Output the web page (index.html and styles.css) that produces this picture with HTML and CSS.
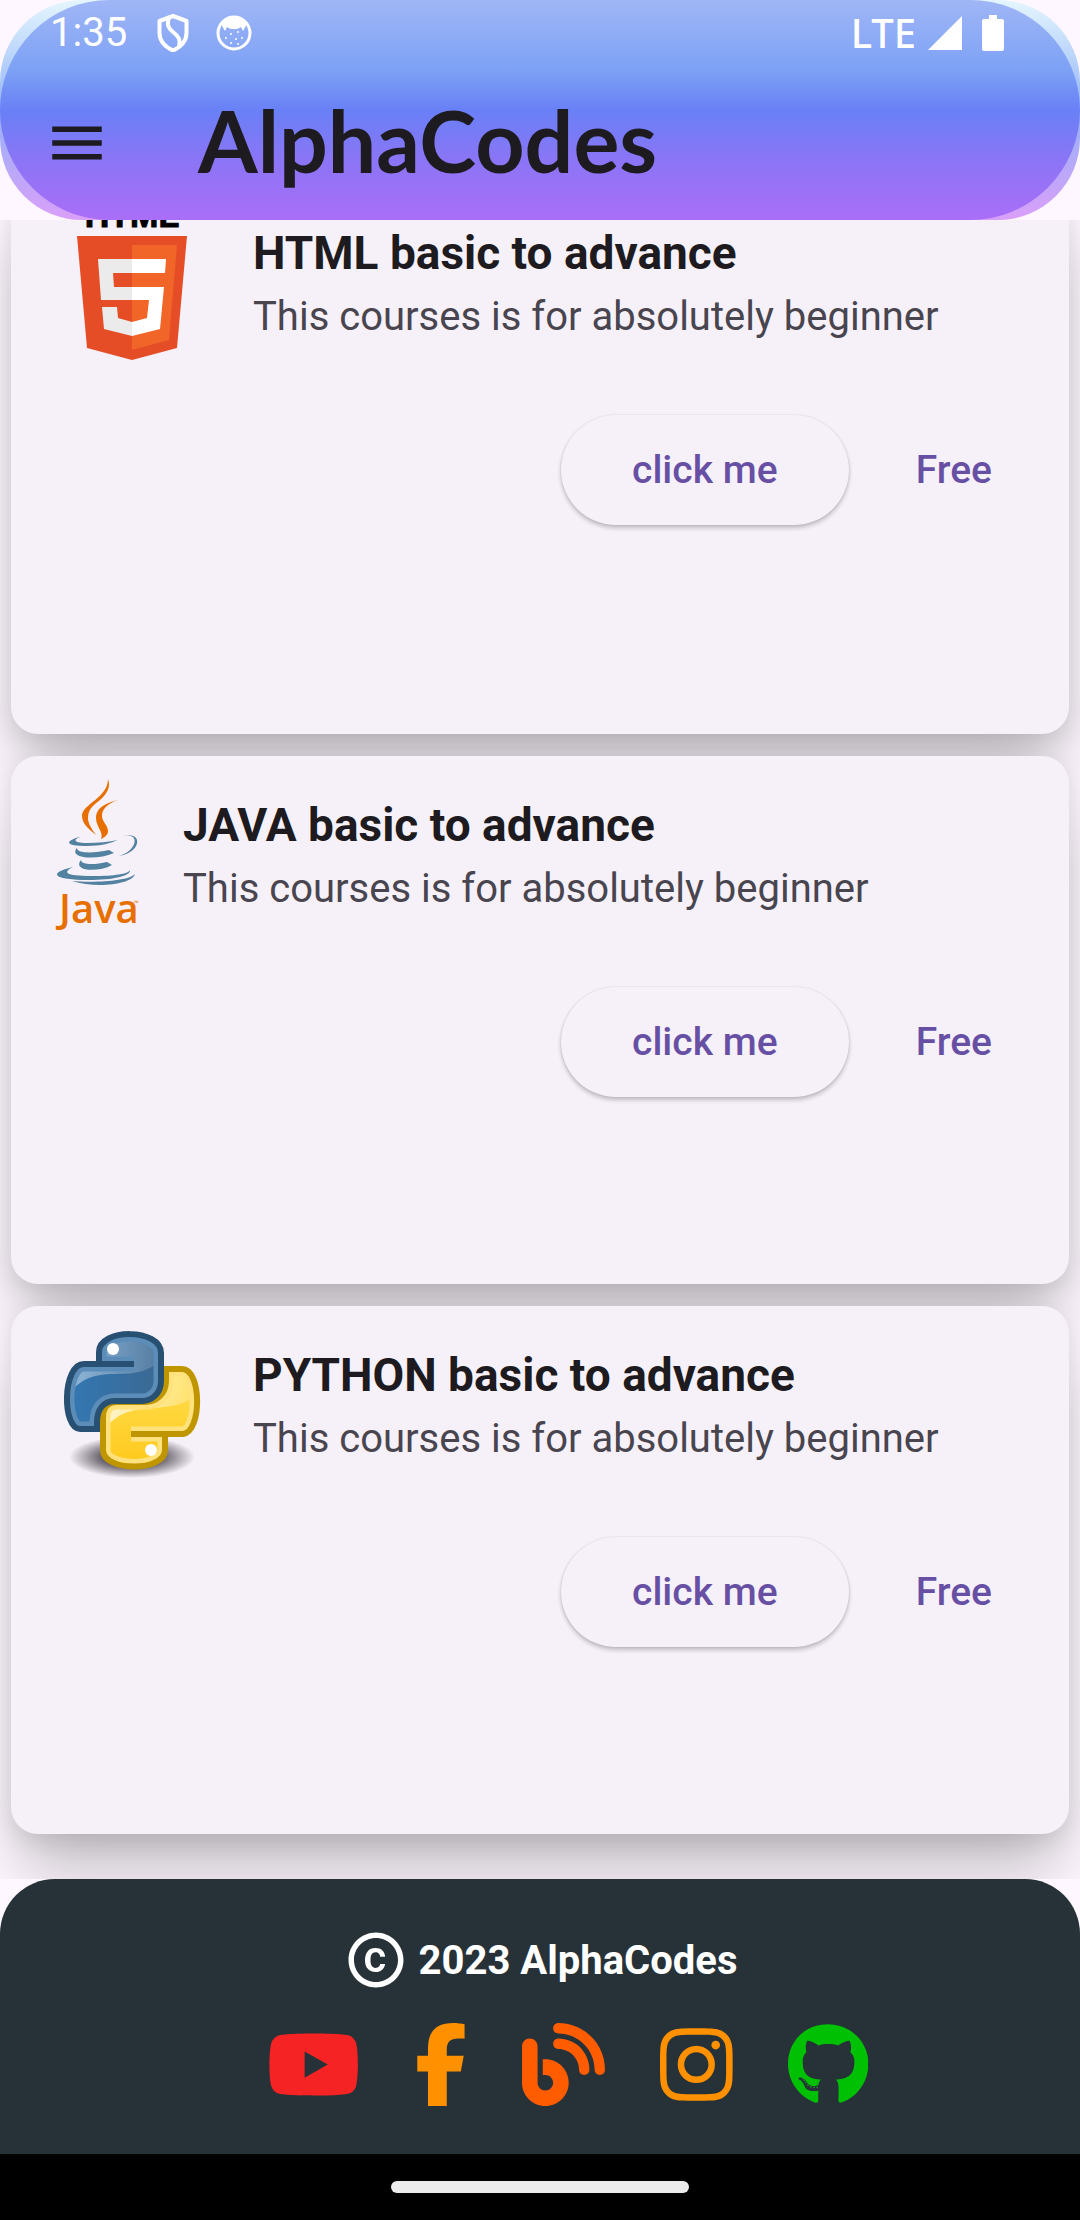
FILE: index.html
```html
<!DOCTYPE html>
<html lang="en">
<head>
<meta charset="utf-8">
<meta name="viewport" content="width=device-width, initial-scale=1">
<title>AlphaCodes</title>
<link rel="stylesheet" href="styles.css">
</head>
<body>
<header class="header">
  <div class="header-inner">
    <div class="status">
      <span class="clock">1:35</span>
      <svg class="status-shield" viewBox="0 0 32 38" aria-hidden="true"><path d="M16 2 29.500 7v12c0 8-6 14-13.500 17.500C8.500 33 2.500 27 2.500 19V7Z" fill="none" stroke="#fff" stroke-width="4" stroke-linejoin="round"/><path d="M12 4c-3 6-1 10 4 14s8 7 6 14" fill="none" stroke="#fff" stroke-width="4"/></svg>
      <svg class="status-face" viewBox="0 0 36 36" aria-hidden="true"><circle cx="18" cy="18" r="16" fill="none" stroke="#fff" stroke-width="3"/><path d="M5 9C10 0 26 0 31 9l-4 7-2-4c-4 3-10 3-14 0l-2 4Z" fill="#fff"/><g fill="#fff"><circle cx="10" cy="23" r="1"/><circle cx="15" cy="19" r="1"/><circle cx="22" cy="17" r="1"/><circle cx="26" cy="23" r="1"/><circle cx="20" cy="24" r="1"/><circle cx="15" cy="28" r="1"/><circle cx="22" cy="29" r="1"/></g></svg>
      <span class="network">LTE</span>
      <svg class="status-signal" viewBox="0 0 34 34" aria-hidden="true"><path d="M34 0v34H0Z" fill="#fff"/></svg>
      <svg class="status-battery" viewBox="0 0 22 36" aria-hidden="true"><path d="M7 0h8v4h5q2 0 2 2v28q0 2-2 2H2q-2 0-2-2V6q0-2 2-2h5Z" fill="#fff"/></svg>
    </div>
    <div class="toolbar">
      <button class="menu" type="button" aria-label="Open menu"><svg viewBox="0 0 24 24" aria-hidden="true"><path fill="#1d1b20" d="M3 18h18v-2H3v2zm0-5h18v-2H3v2zm0-7v2h18V6H3z"/></svg></button>
      <h1 class="brand">AlphaCodes</h1>
    </div>
  </div>
</header>

<main class="scroller">
  <div class="courses">
    <article class="card card-first">
      <div class="tile">
        <svg class="logo" viewBox="0 0 154 154" role="img" aria-label="HTML5">
          <text x="77" y="21" text-anchor="middle" font-family="Liberation Sans" font-weight="700" font-size="34" stroke="#000">HTML</text>
          <path fill="#e44d26" d="M22 30h110l-10 112-45 12-45-12Z"/>
          <path fill="#f16529" d="M77 39h45l-8 95-37 10Z"/>
          <path fill="#ebebeb" d="M77 53H43l3 41h31V81H59l-1-14h19ZM77 116l-14-4-1-11H47l2 22 28 7Z"/>
          <path fill="#fff" d="M77 53h34l-1 14H77ZM77 81h32l-4 42-28 7v-14l15-4 2-18H77Z"/>
        </svg>
        <div class="tile-text"><h2>HTML basic to advance</h2><p>This courses is for absolutely beginner</p></div>
      </div>
      <div class="actions"><button class="raised" type="button">click me</button><button class="flat" type="button">Free</button></div>
    </article>

    <article class="card">
      <div class="tile">
        <svg class="logo logo-narrow" viewBox="0 0 84 154" role="img" aria-label="Java">
          <g fill="#e76f00">
            <path d="M53 1C56 9 52 16 45 22C37 28 33 32 33 40C33 46 37 51 41 57C34 51 27 46 27 38C27 26 53 20 53 1Z"/>
            <path d="M63 22C52 26 47 31 47 38C47 44 53 47 53 53C53 57 50 59 46 61C49 54 41 49 41 40C41 29 52 25 63 22Z"/>
          </g>
          <g fill="#5382a1">
            <path d="M28 58c-20 5-18 10 4 10 14 0 24-3 31-6-9 2-20 3-31 3-15 0-14-4-4-7Z"/>
            <path d="M68 58c18-4 14 15-4 20 22-3 25-25 4-20ZM22 70c-9 10 19 13 37 5l-5-3c-14 3-32 4-32-2ZM26 82c-9 11 17 13 31 5l-5-3c-12 3-26 3-26-2Z"/>
            <path d="M18 89c-26 6-20 13 16 13 24 0 42-4 41-10-2 4-15 6-38 6-28 0-29-4-19-9ZM80 96c-2 10-38 15-63 7 23 2 57 0 63-7Z"/>
          </g>
          <text x="4" y="145" fill="#e76f00" font-family="Open Sans" font-weight="600" font-size="40">Java</text>
          <text x="79" y="127" fill="#e76f00" font-family="Open Sans" font-size="6">™</text>
        </svg>
        <div class="tile-text"><h2>JAVA basic to advance</h2><p>This courses is for absolutely beginner</p></div>
      </div>
      <div class="actions"><button class="raised" type="button">click me</button><button class="flat" type="button">Free</button></div>
    </article>

    <article class="card">
      <div class="tile">
        <svg class="logo" viewBox="0 0 154 154" role="img" aria-label="Python">
          <defs>
            <radialGradient id="ground"><stop offset="0" stop-color="#302b34"/><stop offset=".5" stop-color="#302b34" stop-opacity=".7"/><stop offset="1" stop-color="#302b34" stop-opacity="0"/></radialGradient>
            <linearGradient id="blue" x2="1" y2="0"><stop stop-color="#3278b4"/><stop offset="1" stop-color="#3c6892"/></linearGradient>
            <linearGradient id="yellow" x2="0" y2="1"><stop stop-color="#ffe052"/><stop offset="1" stop-color="#ffc91c"/></linearGradient>
            <linearGradient id="shine" x2="1" y2="0"><stop stop-color="#fff" stop-opacity=".5"/><stop offset="1" stop-color="#fff" stop-opacity=".12"/></linearGradient>
            <linearGradient id="gloss" x2="1" y2="0"><stop stop-color="#fff" stop-opacity=".8"/><stop offset="1" stop-color="#fff" stop-opacity=".2"/></linearGradient>
            <path id="snake-blue" d="M79 36H44V24C44 0 106 0 106 25V53C106 66 96 73 87 73H60C48 73 42 82 42 94V101H25C7 101 7 36 29 36Z"/>
            <path id="snake-yellow" d="M76 106H128C147 104 147 41 127 41H111V53C111 67 100 74 90 74H62C52 74 48 81 48 89V122C48 144 110 144 110 122V108"/>
            <clipPath id="clip-blue"><use href="#snake-blue"/></clipPath>
            <clipPath id="clip-yellow"><use href="#snake-yellow"/></clipPath>
          </defs>
          <ellipse cx="77" cy="129" rx="63" ry="21" fill="url(#ground)"/>
          <use href="#snake-yellow" fill="url(#yellow)"/>
          <g clip-path="url(#clip-yellow)"><path d="M50 101C75 68 110 90 141 68V28H42Z" fill="url(#gloss)"/><use href="#snake-yellow" fill="none" stroke="#ffe27d" stroke-width="15"/></g>
          <use href="#snake-yellow" fill="none" stroke="#bf9600" stroke-width="6"/>
          <use href="#snake-blue" fill="url(#blue)"/>
          <g clip-path="url(#clip-blue)"><path d="M12 69C40 28 75 61 106 32V0H5Z" fill="url(#shine)"/><use href="#snake-blue" fill="none" stroke="#5c8db8" stroke-width="15"/></g>
          <path d="M79 36H29C7 36 7 101 25 101H42V94C42 82 48 73 60 73H87C96 73 106 66 106 53V25C106 0 44 0 44 24V36" fill="none" stroke="#285073" stroke-width="6"/>
          <circle cx="58" cy="21" r="6" fill="#fff"/><circle cx="96" cy="122" r="6" fill="#fff"/>
        </svg>
        <div class="tile-text"><h2>PYTHON basic to advance</h2><p>This courses is for absolutely beginner</p></div>
      </div>
      <div class="actions"><button class="raised" type="button">click me</button><button class="flat" type="button">Free</button></div>
    </article>
  </div>
</main>

<footer class="footer">
  <p class="copyright">
    <svg viewBox="0 0 24 24" role="img" aria-label="Copyright"><path fill="#fff" d="M10.080 10.860c.05-.33.16-.62.3-.87s.34-.46.59-.62c.24-.15.54-.22.91-.23.23.01.44.05.63.13.2.09.38.21.52.36s.25.33.34.53.13.42.14.64h1.790c-.02-.47-.11-.9-.28-1.290s-.4-.73-.7-1.010-.66-.5-1.080-.66-.88-.23-1.390-.23c-.65 0-1.220.11-1.700.34s-.88.53-1.200.92-.56.84-.71 1.360S8 11.290 8 11.870v.27c0 .58.08 1.120.23 1.640s.39.97.71 1.350.72.69 1.200.91 1.050.34 1.700.34c.47 0 .91-.08 1.320-.23s.77-.36 1.080-.63.56-.58.74-.94.29-.74.3-1.150h-1.790c-.01.21-.06.4-.15.58s-.21.33-.36.46-.32.23-.52.3c-.19.07-.39.09-.6.1-.36-.01-.66-.08-.89-.23-.25-.16-.45-.37-.59-.62s-.25-.55-.3-.88-.08-.67-.08-1v-.27c0-.35.03-.68.08-1.010zM12 2C6.480 2 2 6.480 2 12s4.480 10 10 10 10-4.480 10-10S17.520 2 12 2zm0 18c-4.410 0-8-3.590-8-8s3.590-8 8-8 8 3.590 8 8-3.590 8-8 8z"/></svg>
    2023 AlphaCodes
  </p>
  <nav class="social" aria-label="Social">
    <a href="#youtube" aria-label="YouTube"><svg viewBox="0 0 576 512"><path fill="#f52323" d="M549.655 124.083c-6.281-23.650-24.787-42.276-48.284-48.597C458.781 64 288 64 288 64S117.220 64 74.629 75.486c-23.497 6.322-42.003 24.947-48.284 48.597-11.412 42.867-11.412 132.305-11.412 132.305s0 89.438 11.412 132.305c6.281 23.650 24.787 41.500 48.284 47.821C117.220 448 288 448 288 448s170.780 0 213.371-11.486c23.497-6.321 42.003-24.171 48.284-47.821 11.412-42.867 11.412-132.305 11.412-132.305s0-89.438-11.412-132.305zm-317.510 213.508V175.185l142.739 81.205-142.739 81.201z"/></svg></a>
    <a href="#facebook" aria-label="Facebook"><svg viewBox="0 0 320 512"><path fill="#ff9100" d="M80 299.300V512H196V299.300h86.500l18-97.800H196V166.900c0-51.700 20.300-71.500 72.700-71.500c16.300 0 29.400 .4 37 1.200V7.900C291.400 4 256.400 0 236.200 0C129.300 0 80 50.500 80 159.400v42.100H14v97.800H80z"/></svg></a>
    <a href="#blog" aria-label="Blog"><svg viewBox="0 0 512 512"><path fill="#ff5c00" d="M192 32c0 17.700 14.300 32 32 32c123.700 0 224 100.300 224 224c0 17.700 14.300 32 32 32s32-14.300 32-32C512 128.900 383.100 0 224 0c-17.700 0-32 14.300-32 32zm0 96c0 17.700 14.300 32 32 32c70.700 0 128 57.300 128 128c0 17.700 14.300 32 32 32s32-14.300 32-32c0-106-86-192-192-192c-17.700 0-32 14.300-32 32zM96 144c0-26.500-21.500-48-48-48S0 117.500 0 144V368c0 79.500 64.500 144 144 144s144-64.500 144-144s-64.500-144-144-144H128v96h16c26.500 0 48 21.500 48 48s-21.500 48-48 48s-48-21.500-48-48V144z"/></svg></a>
    <a href="#instagram" aria-label="Instagram"><svg viewBox="0 0 448 512"><path fill="#ff9100" d="M224.100 141c-63.600 0-114.900 51.300-114.900 114.900s51.300 114.900 114.900 114.900S339 319.500 339 255.900 287.700 141 224.100 141zm0 189.600c-41.100 0-74.700-33.500-74.700-74.700s33.500-74.700 74.700-74.700 74.700 33.500 74.700 74.700-33.600 74.700-74.700 74.700zm146.400-194.300c0 14.900-12 26.800-26.800 26.800-14.900 0-26.800-12-26.800-26.800s12-26.800 26.800-26.800 26.800 12 26.800 26.800zm76.100 27.200c-1.700-35.900-9.900-67.700-36.200-93.900-26.200-26.200-58-34.400-93.900-36.200-37-2.100-147.900-2.100-184.800 0-35.800 1.700-67.600 9.900-93.900 36.100s-34.400 58-36.200 93.900c-2.100 37-2.100 147.900 0 184.800 1.700 35.900 9.900 67.700 36.200 93.900s58 34.400 93.900 36.200c37 2.100 147.900 2.100 184.800 0 35.900-1.700 67.700-9.900 93.900-36.200 26.200-26.200 34.400-58 36.200-93.900 2.100-37 2.100-147.800 0-184.700zM398.800 388c-7.800 19.600-22.900 34.700-42.600 42.600-29.500 11.700-99.500 9-132.100 9s-102.700 2.600-132.100-9c-19.600-7.800-34.700-22.900-42.600-42.600-11.700-29.500-9-99.500-9-132.100s-2.600-102.700 9-132.100c7.800-19.600 22.900-34.700 42.600-42.600 29.500-11.700 99.500-9 132.100-9s102.700-2.600 132.100 9c19.600 7.800 34.700 22.900 42.600 42.600 11.700 29.500 9 99.500 9 132.100s2.700 102.700-9 132.100z"/></svg></a>
    <a href="#github" aria-label="GitHub"><svg viewBox="0 0 496 512"><path fill="#00c004" d="M165.900 397.400c0 2-2.300 3.600-5.200 3.600-3.300.3-5.600-1.300-5.600-3.600 0-2 2.300-3.600 5.200-3.600 3-.3 5.600 1.300 5.600 3.600zm-31.100-4.500c-.7 2 1.300 4.300 4.300 4.900 2.600 1 5.600 0 6.200-2s-1.300-4.300-4.300-5.200c-2.600-.7-5.500.3-6.200 2.300zm44.200-1.700c-2.900.7-4.900 2.600-4.600 4.900.3 2 2.900 3.300 5.900 2.600 2.900-.7 4.900-2.600 4.600-4.600-.3-1.900-3-3.200-5.900-2.900zM244.800 8C106.100 8 0 113.300 0 252c0 110.900 69.800 205.800 169.500 239.200 12.800 2.300 17.300-5.600 17.300-12.100 0-6.200-.3-40.400-.3-61.400 0 0-70 15-84.700-29.800 0 0-11.400-29.100-27.800-36.600 0 0-22.900-15.700 1.600-15.400 0 0 24.900 2 38.600 25.800 21.900 38.600 58.600 27.500 72.900 20.900 2.300-16 8.800-27.100 16-33.700-55.900-6.200-112.300-14.300-112.300-110.500 0-27.500 7.600-41.300 23.600-58.900-2.600-6.500-11.100-33.300 3-68.400 20.900-6.500 69 27 69 27 20-5.600 41.500-8.500 62.800-8.500s42.800 2.900 62.800 8.500c0 0 48.100-33.600 69-27 13 31.400 7.600 57.800 3 68.400 16 17.700 25.800 31.500 25.800 58.900 0 96.500-58.900 104.200-114.800 110.500 9.200 7.900 17 22.900 17 46.400 0 33.700-.3 75.400-.3 83.600 0 6.500 4.600 14.400 17.300 12.100C428.200 457.800 496 362.900 496 252 496 113.300 383.500 8 244.800 8zM97.200 352.900c-1.300 1-1 3.300.7 5.200 1.600 1.600 3.900 2.300 5.200 1 1.300-1 1-3.300-.7-5.200-1.600-1.600-3.900-2.300-5.200-1zm-10.800-8.100c-.7 1.300.3 2.900 2.300 3.900 1.600 1 3.600.7 4.300-.7.7-1.300-.3-2.900-2.300-3.900-2-.6-3.600-.3-4.300.7zm32.400 35.600c-1.600 1.300-1 4.300 1.300 6.200 2.300 2.300 5.200 2.600 6.500 1 1.300-1.300.7-4.300-1.300-6.200-2.200-2.300-5.200-2.600-6.500-1zm-11.400-14.700c-1.600 1-1.600 3.600 0 5.900 1.600 2.300 4.300 3.300 5.600 2.300 1.600-1.300 1.600-3.900 0-6.200-1.400-2.300-4-3.300-5.600-2z"/></svg></a>
  </nav>
</footer>
<div class="system-bar"><span class="handle"></span></div>
</body>
</html>
```
FILE: styles.css
```css
* { box-sizing: border-box; margin: 0; padding: 0; }

body {
  display: flex;
  flex-direction: column;
  height: 100vh;
  background: #fef7ff;
  color: #1d1b20;
  font-family: Roboto, "Liberation Sans", sans-serif;
}

svg { display: block; }
button { border: 0; background: none; font: inherit; color: inherit; }

/* App bar with the status row */
.header {
  flex: none;
  border-radius: 82px;
  background: linear-gradient(#e4f6fe, #93b4f8 50%, #da9ff9);
}
.header-inner {
  border-radius: 110px;
  background: linear-gradient(#a0b6f6, #7da1f5 32%, #6980f6 50%, #8e74f6 75%, #a96ef7);
}
.status {
  display: flex;
  align-items: center;
  height: 66px;
  padding: 0 76px 0 50px;
  color: #fff;
}
.clock, .network { font-size: 40px; line-height: 66px; }
.status-shield { width: 32px; height: 38px; margin-left: 30px; }
.status-face { width: 36px; height: 36px; margin-left: 27px; }
.network { margin-left: auto; font-family: "Noto Sans", sans-serif; font-weight: 500; line-height: 62px; }
.status-signal { width: 34px; height: 34px; margin-left: 12px; }
.status-battery { width: 22px; height: 36px; margin-left: 20px; }

.toolbar {
  display: flex;
  align-items: center;
  gap: 88px;
  height: 154px;
  padding: 0 44px;
}
.menu, .menu svg { width: 66px; height: 66px; }
.brand {
  padding-bottom: 6px;
  font-family: Lato, sans-serif;
  font-size: 86px;
  font-weight: 700;
  line-height: 110px;
}

/* Course list: opens scrolled to its end */
.scroller {
  display: flex;
  flex: 1;
  flex-direction: column-reverse;
  min-height: 0;
  overflow-x: hidden;
  overflow-y: auto;
  scrollbar-width: none;
}
.courses {
  display: flex;
  flex: none;
  flex-direction: column;
  gap: 22px;
  padding: 11px 11px 45px;
}
.card {
  min-height: 528px;
  padding: 22px 44px;
  border-radius: 27px;
  background: #f6f1f9;
  box-shadow: 0 46px 66px -10px rgba(0, 0, 0, .24), 0 8px 24px rgba(0, 0, 0, .1);
}
.card-first { min-height: 550px; }
.tile { display: flex; align-items: center; gap: 44px; }
.logo { flex: none; width: 154px; height: 154px; overflow: visible; }
.logo-narrow { width: 84px; }
.tile-text h2 { margin-bottom: 6px; font-size: 46px; font-weight: 700; line-height: 60px; }
.tile-text p { color: #49454f; font-size: 40px; line-height: 55px; }

.actions {
  display: flex;
  justify-content: flex-end;
  gap: 34px;
  padding-top: 55px;
  color: #6750a4;
  font-size: 39px;
  font-weight: 500;
}
.raised {
  min-width: 288px;
  height: 110px;
  padding: 0 66px;
  border-radius: 55px;
  box-shadow: 0 3px 4px rgba(0, 0, 0, .22), 0 0 2px rgba(0, 0, 0, .12);
}
.flat { height: 110px; padding: 0 33px; }

.footer {
  display: flex;
  flex: none;
  flex-direction: column;
  align-items: center;
  gap: 30px;
  padding: 48px 44px;
  border-radius: 55px 55px 0 0;
  background: #273238;
}
.copyright {
  display: flex;
  align-items: center;
  gap: 10px;
  color: #fff;
  font-size: 40px;
  font-weight: 700;
}
.copyright svg { width: 66px; height: 66px; }
.social { display: flex; gap: 55px; padding-left: 55px; }
.social svg { height: 83px; }

.system-bar {
  display: flex;
  flex: none;
  align-items: center;
  justify-content: center;
  height: 66px;
  background: #000;
}
.handle { width: 298px; height: 12px; border-radius: 6px; background: #ececec; }
```
